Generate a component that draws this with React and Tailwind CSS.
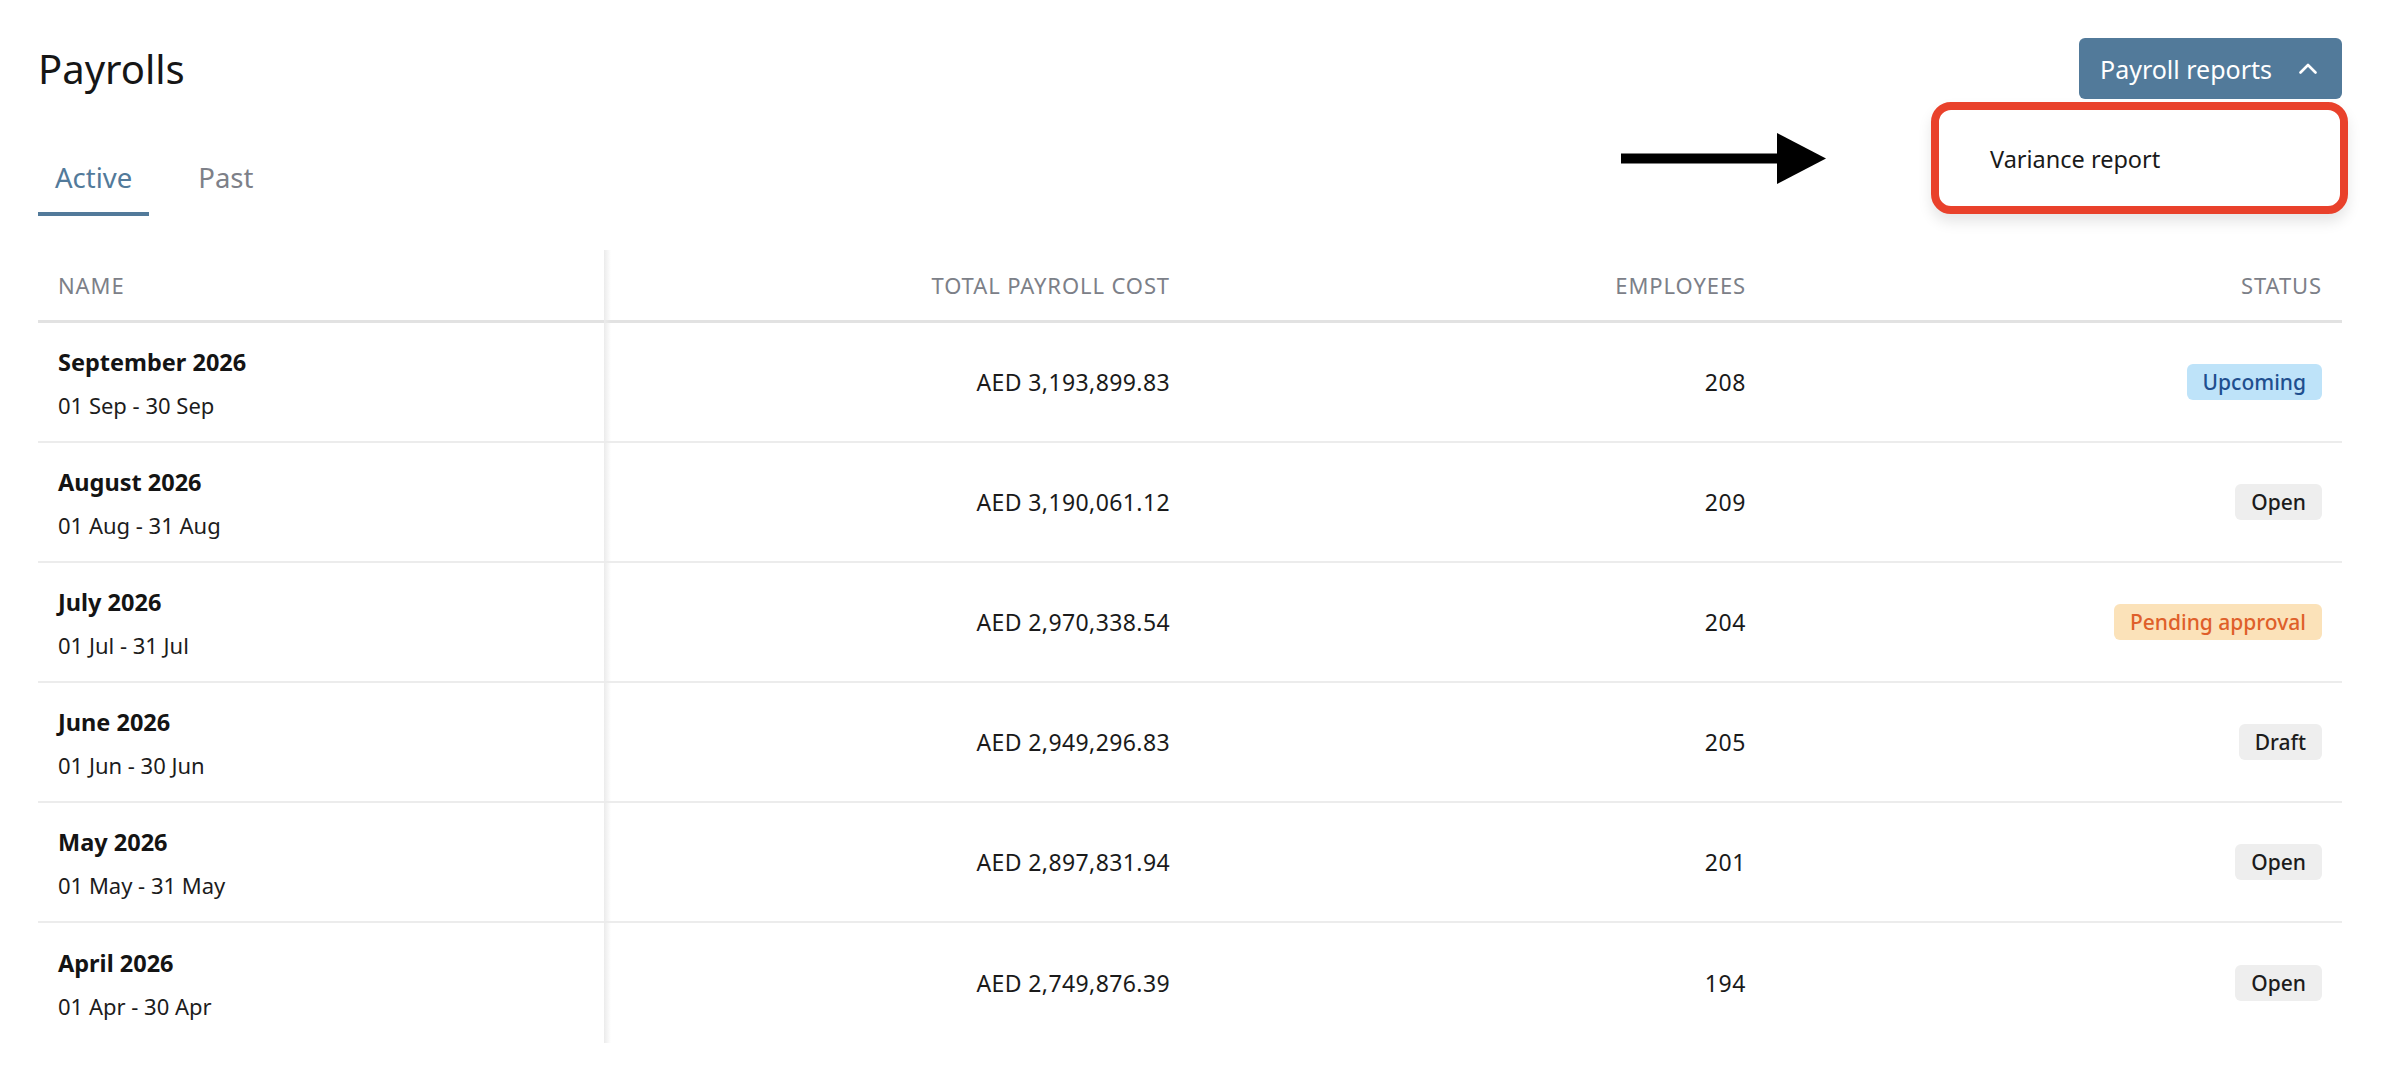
import React from "react";

const rows = [
  { name: "September 2026", range: "01 Sep - 30 Sep", cost: "AED 3,193,899.83", employees: 208, status: "Upcoming" },
  { name: "August 2026", range: "01 Aug - 31 Aug", cost: "AED 3,190,061.12", employees: 209, status: "Open" },
  { name: "July 2026", range: "01 Jul - 31 Jul", cost: "AED 2,970,338.54", employees: 204, status: "Pending approval" },
  { name: "June 2026", range: "01 Jun - 30 Jun", cost: "AED 2,949,296.83", employees: 205, status: "Draft" },
  { name: "May 2026", range: "01 May - 31 May", cost: "AED 2,897,831.94", employees: 201, status: "Open" },
  { name: "April 2026", range: "01 Apr - 30 Apr", cost: "AED 2,749,876.39", employees: 194, status: "Open" },
];

const badgeStyles = {
  Upcoming: "bg-[#bee3f9] text-[#1f4f8f]",
  Open: "bg-[#eeeeee] text-[#1c1c1c]",
  Draft: "bg-[#eeeeee] text-[#1c1c1c]",
  "Pending approval": "bg-[#fbe2b9] text-[#df5f2a]",
};

function StatusBadge({ status }) {
  return (
    <span
      className={`inline-flex h-[36px] items-center rounded-[6px] px-[16px] text-[21px] font-medium leading-[36px] ${badgeStyles[status]}`}
    >
      {status}
    </span>
  );
}

function ReportsMenu() {
  return (
    <div className="relative">
      <button className="flex h-[61px] w-[263px] items-center rounded-[6px] bg-[#527a9a] pl-[21px] pr-[25px] text-[25px] leading-[32px] text-white">
        <span>Payroll reports</span>
        <svg className="ml-auto" width="18" height="11" viewBox="0 0 18 11" fill="none">
          <polyline points="1.5,9.5 9,2 16.5,9.5" stroke="white" strokeWidth="2.6" strokeLinecap="round" strokeLinejoin="round" />
        </svg>
      </button>
      {/* open dropdown, outlined in red */}
      <div className="absolute right-[-6px] top-[64px] h-[112px] w-[417px] rounded-[20px] border-[8px] border-[#e9412b] bg-white shadow-[0_8px_14px_rgba(0,0,0,0.10)]">
        <div className="flex h-full items-center pl-[51px] pt-[2px] text-[23.5px] leading-[32px] text-[#1a1a1a]">
          Variance report
        </div>
      </div>
    </div>
  );
}

export default function App() {
  return (
    <div className="relative min-h-screen bg-white pl-[38px] pr-[40px] pt-[38px] font-['Noto_Sans',Roboto,sans-serif] text-[#1a1a1a]">
      {/* pointer arrow */}
      <svg className="absolute left-[1621px] top-[133px]" width="206" height="51" viewBox="0 0 206 51">
        <rect x="0" y="20.5" width="158" height="10" fill="#000" />
        <polygon points="156,0 205,25.5 156,51" fill="#000" />
      </svg>

      <div className="flex h-[61px] items-center justify-between">
        <h1 className="text-[40px] font-normal leading-[48px] text-[#161616]">Payrolls</h1>
        <ReportsMenu />
      </div>

      <div className="mt-[61px] flex gap-[32px]">
        <div className="border-b-4 border-[#527a9a] px-[17px] pb-[16px] text-[27.5px] leading-[36px] text-[#527a9a]">
          Active
        </div>
        <div className="border-b-4 border-transparent px-[17px] pb-[16px] text-[27.5px] leading-[36px] text-[#7d8088]">
          Past
        </div>
      </div>

      <div className="relative mt-[34px]">
        {/* sticky-column shadow */}
        <div className="absolute bottom-0 left-[566px] top-0 w-[7px] bg-gradient-to-r from-[#ebebeb] to-transparent" />

        <div className="grid h-[73px] grid-cols-[567px_585px_576px_1fr] border-b-[3px] border-[#e2e2e2] text-[22px] uppercase leading-[28px] tracking-[0.9px] text-[#7c8088]">
          <div className="flex items-center px-[20px]">Name</div>
          <div className="flex items-center justify-end px-[20px]">Total payroll cost</div>
          <div className="flex items-center justify-end px-[20px]">Employees</div>
          <div className="flex items-center justify-end px-[20px]">Status</div>
        </div>

        {rows.map((r, i) => (
          <div
            key={r.name}
            className={`grid h-[120px] grid-cols-[567px_585px_576px_1fr] ${i < rows.length - 1 ? "border-b-2 border-[#ececec]" : ""}`}
          >
            <div className="flex flex-col justify-center px-[20px] pt-[2px]">
              <div className="text-[23.5px] font-bold leading-[30px] text-[#141414]">{r.name}</div>
              <div className="mt-[13px] text-[22px] leading-[30px] text-[#1c1c1c]">{r.range}</div>
            </div>
            <div className="flex items-center justify-end px-[20px] text-[23px] leading-[30px] tracking-[0.4px]">{r.cost}</div>
            <div className="flex items-center justify-end px-[20px] text-[23px] leading-[30px] tracking-[0.6px]">{r.employees}</div>
            <div className="flex items-center justify-end px-[20px]">
              <StatusBadge status={r.status} />
            </div>
          </div>
        ))}
      </div>
    </div>
  );
}
